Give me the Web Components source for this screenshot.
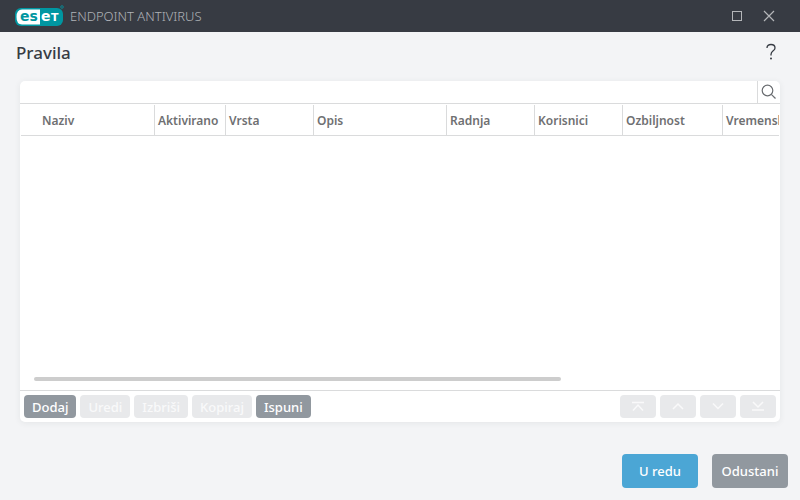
<!DOCTYPE html>
<html lang="hr">
<head>
<meta charset="utf-8">
<meta name="viewport" content="width=device-width, initial-scale=1">
<title>ESET Endpoint Antivirus - Pravila</title>
<style>
    html, body{
        margin: 0;
        padding: 0;
    }

    body{
        font-family: "Noto Sans", "Open Sans", sans-serif;
        font-size: 13px;
        color: #373c44;
        background: #f3f4f6;
    }
</style>
</head>
<body>
<rules-window></rules-window>

<script>
class BrandLogo extends HTMLElement{
    constructor(){
        super();
        this.shadowDOM=this.attachShadow({mode:"open"});
        this.render();
    }

    render(){
        this.shadowDOM.innerHTML=`
        <style>
        :host {
            display: block;
            width: 50px;
            height: 24px;
        }

        svg {
            display: block;
        }

        text {
            font-family: "DejaVu Sans", sans-serif;
            font-weight: 700;
            font-size: 14px;
        }

        .cap {
            font-size: 11px;
        }
        </style>
        <svg width="50" height="24" viewBox="0 0 50 24" role="img" aria-label="eset">
            <rect x="0" y="4" width="48" height="18" rx="6" fill="#0096a1"/>
            <path d="M7 5.500H25V20.500H7Q1.500 20.500 1.500 13T7 5.500Z" fill="#fff"/>
            <text x="5" y="17" fill="#0096a1">es</text>
            <text x="26" y="17" fill="#fff">e</text>
            <text x="36" y="17" fill="#fff" class="cap">T</text>
            <circle cx="47" cy="3" r="1.300" fill="none" stroke="#0096a1" stroke-width="0.800"/>
        </svg>`;
    }
}

class TitleBar extends HTMLElement{
    constructor(){
        super();
        this.shadowDOM=this.attachShadow({mode:"open"});
        this.render();
    }

    render(){
        this.shadowDOM.innerHTML=`
        <style>
        * {
            box-sizing: border-box;
        }

        :host {
            display: flex;
            align-items: center;
            height: 32px;
            padding: 0 15px;
            background: #373b43;
            color: #b0b3b8;
        }

        .product {
            flex: 1;
            margin-left: 5px;
            font-weight: 300;
            font-size: 13px;
        }

        button {
            display: block;
            width: 32px;
            height: 32px;
            padding: 0;
            border: 0;
            background: none;
            color: #b4b6b9;
        }

        svg {
            display: block;
            margin: 0 auto;
        }
        </style>
        <brand-logo></brand-logo>
        <span class="product"><slot></slot></span>
        <button type="button" aria-label="Maksimiziraj">
            <svg width="12" height="12" viewBox="0 0 12 12"><rect x="1.500" y="1.500" width="9" height="9" fill="none" stroke="currentColor"/></svg>
        </button>
        <button type="button" aria-label="Zatvori">
            <svg width="12" height="12" viewBox="0 0 12 12"><path d="M1 1L11 11M11 1L1 11" fill="none" stroke="currentColor" stroke-width="1.200"/></svg>
        </button>`;
    }
}

class PageHeading extends HTMLElement{
    constructor(){
        super();
        this.shadowDOM=this.attachShadow({mode:"open"});
        this.render();
    }

    render(){
        this.shadowDOM.innerHTML=`
        <style>
        :host {
            display: flex;
            align-items: center;
            justify-content: space-between;
            height: 40px;
            padding: 0 20px 0 16px;
        }

        h1 {
            margin: 0;
            font-size: 17px;
            font-weight: 500;
        }

        button {
            width: 18px;
            height: 24px;
            padding: 0;
            border: 0;
            background: none;
            color: #373c44;
        }

        svg {
            display: block;
            margin: 0 auto;
        }
        </style>
        <h1><slot></slot></h1>
        <button type="button" aria-label="Pomoć">
            <svg width="12" height="18" viewBox="0 0 12 18"><path d="M2 5C2 2.600 3.700 1.500 6 1.500S10 2.800 10 4.900C10 8 6 7.600 6 11.500V12.500" fill="none" stroke="currentColor" stroke-width="1.300"/><circle cx="6" cy="15.500" r="1" fill="currentColor"/></svg>
        </button>`;
    }
}

class SearchRow extends HTMLElement{
    constructor(){
        super();
        this.shadowDOM=this.attachShadow({mode:"open"});
        this.render();
    }

    render(){
        this.shadowDOM.innerHTML=`
        <style>
        :host {
            display: flex;
            height: 22px;
            border-bottom: 1px solid #dadbdc;
        }

        input {
            flex: 1;
            min-width: 0;
            padding: 0 8px;
            border: 0;
            outline: 0;
            background: none;
            font: inherit;
            color: inherit;
        }

        button {
            width: 23px;
            padding: 0;
            border: 0;
            border-left: 1px solid #dadbdc;
            background: none;
            color: #6b6e72;
        }

        svg {
            display: block;
            margin: 0 auto;
        }
        </style>
        <input type="text" aria-label="Traži">
        <button type="button" aria-label="Traži">
            <svg width="16" height="16" viewBox="0 0 16 16" fill="none" stroke="currentColor" stroke-width="1.200"><circle cx="6.500" cy="6.500" r="5.300"/><path d="M10.300 10.300L14.500 14.500"/></svg>
        </button>`;
    }
}

class RulesTable extends HTMLElement{
    constructor(){
        super();
        this.shadowDOM=this.attachShadow({mode:"open"});
    }

    set columns(columns){
        this._columns=columns;
        this.render();
    }

    render(){
        this.shadowDOM.innerHTML=`
        <style>
        * {
            box-sizing: border-box;
        }

        :host {
            display: flex;
            flex-direction: column;
            flex: 1;
            min-height: 0;
            border-bottom: 1px solid #dadbdc;
        }

        .view {
            flex: 1;
            margin: 1px 1px 0;
            overflow: hidden;
        }

        table {
            width: 1052px;
            table-layout: fixed;
            border-collapse: separate;
            border-spacing: 0;
        }

        th {
            height: 31px;
            padding: 2px 3px 0;
            border-bottom: 1px solid #dadbdc;
            border-left: 1px solid #dadbdc;
            font-size: 12px;
            font-weight: 600;
            line-height: 16px;
            text-align: left;
            white-space: nowrap;
            color: #6f7072;
        }

        th:first-child {
            padding-left: 21px;
            border-left: 0;
        }

        .track {
            margin: 0 14px 9px;
        }

        .thumb {
            width: 72%;
            height: 4px;
            border-radius: 2px;
            background: #cdcdcd;
        }
        </style>
        <div class="view">
            <table>
                <colgroup></colgroup>
                <thead><tr></tr></thead>
                <tbody></tbody>
            </table>
        </div>
        <div class="track"><div class="thumb"></div></div>`;
        const group=this.shadowDOM.querySelector("colgroup");
        const row=this.shadowDOM.querySelector("tr");
        this._columns.forEach(column => {
            const col=document.createElement("col");
            col.style.width=`${column.width}px`;
            group.appendChild(col);
            const th=document.createElement("th");
            th.scope="col";
            th.textContent=column.name;
            row.appendChild(th);
        });
    }
}

class ActionButton extends HTMLElement{
    constructor(){
        super();
        this.shadowDOM=this.attachShadow({mode:"open"});
    }

    connectedCallback(){
        this.render();
    }

    render(){
        this.shadowDOM.innerHTML=`
        <style>
        :host {
            display: block;
        }

        button {
            display: flex;
            align-items: center;
            justify-content: center;
            min-width: 36px;
            height: 23px;
            padding: 0 8px;
            border: 0;
            border-radius: 4px;
            background: #91989f;
            color: #fff;
            font: inherit;
            font-weight: 500;
            white-space: nowrap;
        }

        button:disabled {
            background: #e8e9eb;
            color: #f9f9fa;
        }

        :host([size="large"]) button {
            width: 76px;
            height: 34px;
        }

        :host([kind="primary"]) button {
            background: #4ba6d5;
        }
        </style>
        <button type="button"><slot></slot></button>`;
        const button=this.shadowDOM.querySelector("button");
        button.disabled=this.hasAttribute("disabled");
        if(this.hasAttribute("label")){
            button.setAttribute("aria-label", this.getAttribute("label"));
        }
    }
}

class TableToolbar extends HTMLElement{
    constructor(){
        super();
        this.shadowDOM=this.attachShadow({mode:"open"});
        this.render();
    }

    render(){
        this.shadowDOM.innerHTML=`
        <style>
        :host {
            display: flex;
            justify-content: space-between;
            padding: 4px;
        }

        .group {
            display: flex;
            gap: 4px;
        }

        svg {
            display: block;
            fill: none;
            stroke: currentColor;
            stroke-width: 1.500;
        }
        </style>
        <div class="group">
            <action-button>Dodaj</action-button>
            <action-button disabled>Uredi</action-button>
            <action-button disabled>Izbriši</action-button>
            <action-button disabled>Kopiraj</action-button>
            <action-button>Ispuni</action-button>
        </div>
        <div class="group">
            <action-button disabled label="Na vrh"><svg width="12" height="12" viewBox="0 0 12 12"><path d="M0 1.500H12M1 9.500L6 4L11 9.500"/></svg></action-button>
            <action-button disabled label="Gore"><svg width="12" height="12" viewBox="0 0 12 12"><path d="M1 8L6 3L11 8"/></svg></action-button>
            <action-button disabled label="Dolje"><svg width="12" height="12" viewBox="0 0 12 12"><path d="M1 2.500L6 7.500L11 2.500"/></svg></action-button>
            <action-button disabled label="Na dno"><svg width="12" height="12" viewBox="0 0 12 12"><path d="M1 1L6 6L11 1M0 9H12"/></svg></action-button>
        </div>`;
    }
}

class RulesWindow extends HTMLElement{
    constructor(){
        super();
        this.shadowDOM=this.attachShadow({mode:"open"});
        this.render();
    }

    render(){
        this.shadowDOM.innerHTML=`
        <style>
        :host {
            display: flex;
            flex-direction: column;
            min-height: 100vh;
        }

        main {
            display: flex;
            flex-direction: column;
            flex: 1;
            margin: 9px 20px 0;
            border-radius: 5px;
            background: #fff;
            box-shadow: 0 1px 6px rgba(55, 60, 68, 0.08);
            overflow: hidden;
        }

        footer {
            display: flex;
            justify-content: flex-end;
            gap: 14px;
            padding: 32px 12px 12px;
        }
        </style>
        <title-bar>ENDPOINT ANTIVIRUS</title-bar>
        <page-heading>Pravila</page-heading>
        <main>
            <search-row></search-row>
            <rules-table></rules-table>
            <table-toolbar></table-toolbar>
        </main>
        <footer>
            <action-button size="large" kind="primary">U redu</action-button>
            <action-button size="large">Odustani</action-button>
        </footer>`;
        this.shadowDOM.querySelector("rules-table").columns=[
            {name:"Naziv", width:133},
            {name:"Aktivirano", width:71},
            {name:"Vrsta", width:88},
            {name:"Opis", width:133},
            {name:"Radnja", width:88},
            {name:"Korisnici", width:88},
            {name:"Ozbiljnost", width:100},
            {name:"Vremenski raspored", width:351}
        ];
    }
}

customElements.define("brand-logo", BrandLogo);
customElements.define("title-bar", TitleBar);
customElements.define("page-heading", PageHeading);
customElements.define("search-row", SearchRow);
customElements.define("rules-table", RulesTable);
customElements.define("action-button", ActionButton);
customElements.define("table-toolbar", TableToolbar);
customElements.define("rules-window", RulesWindow);
</script>
</body>
</html>
